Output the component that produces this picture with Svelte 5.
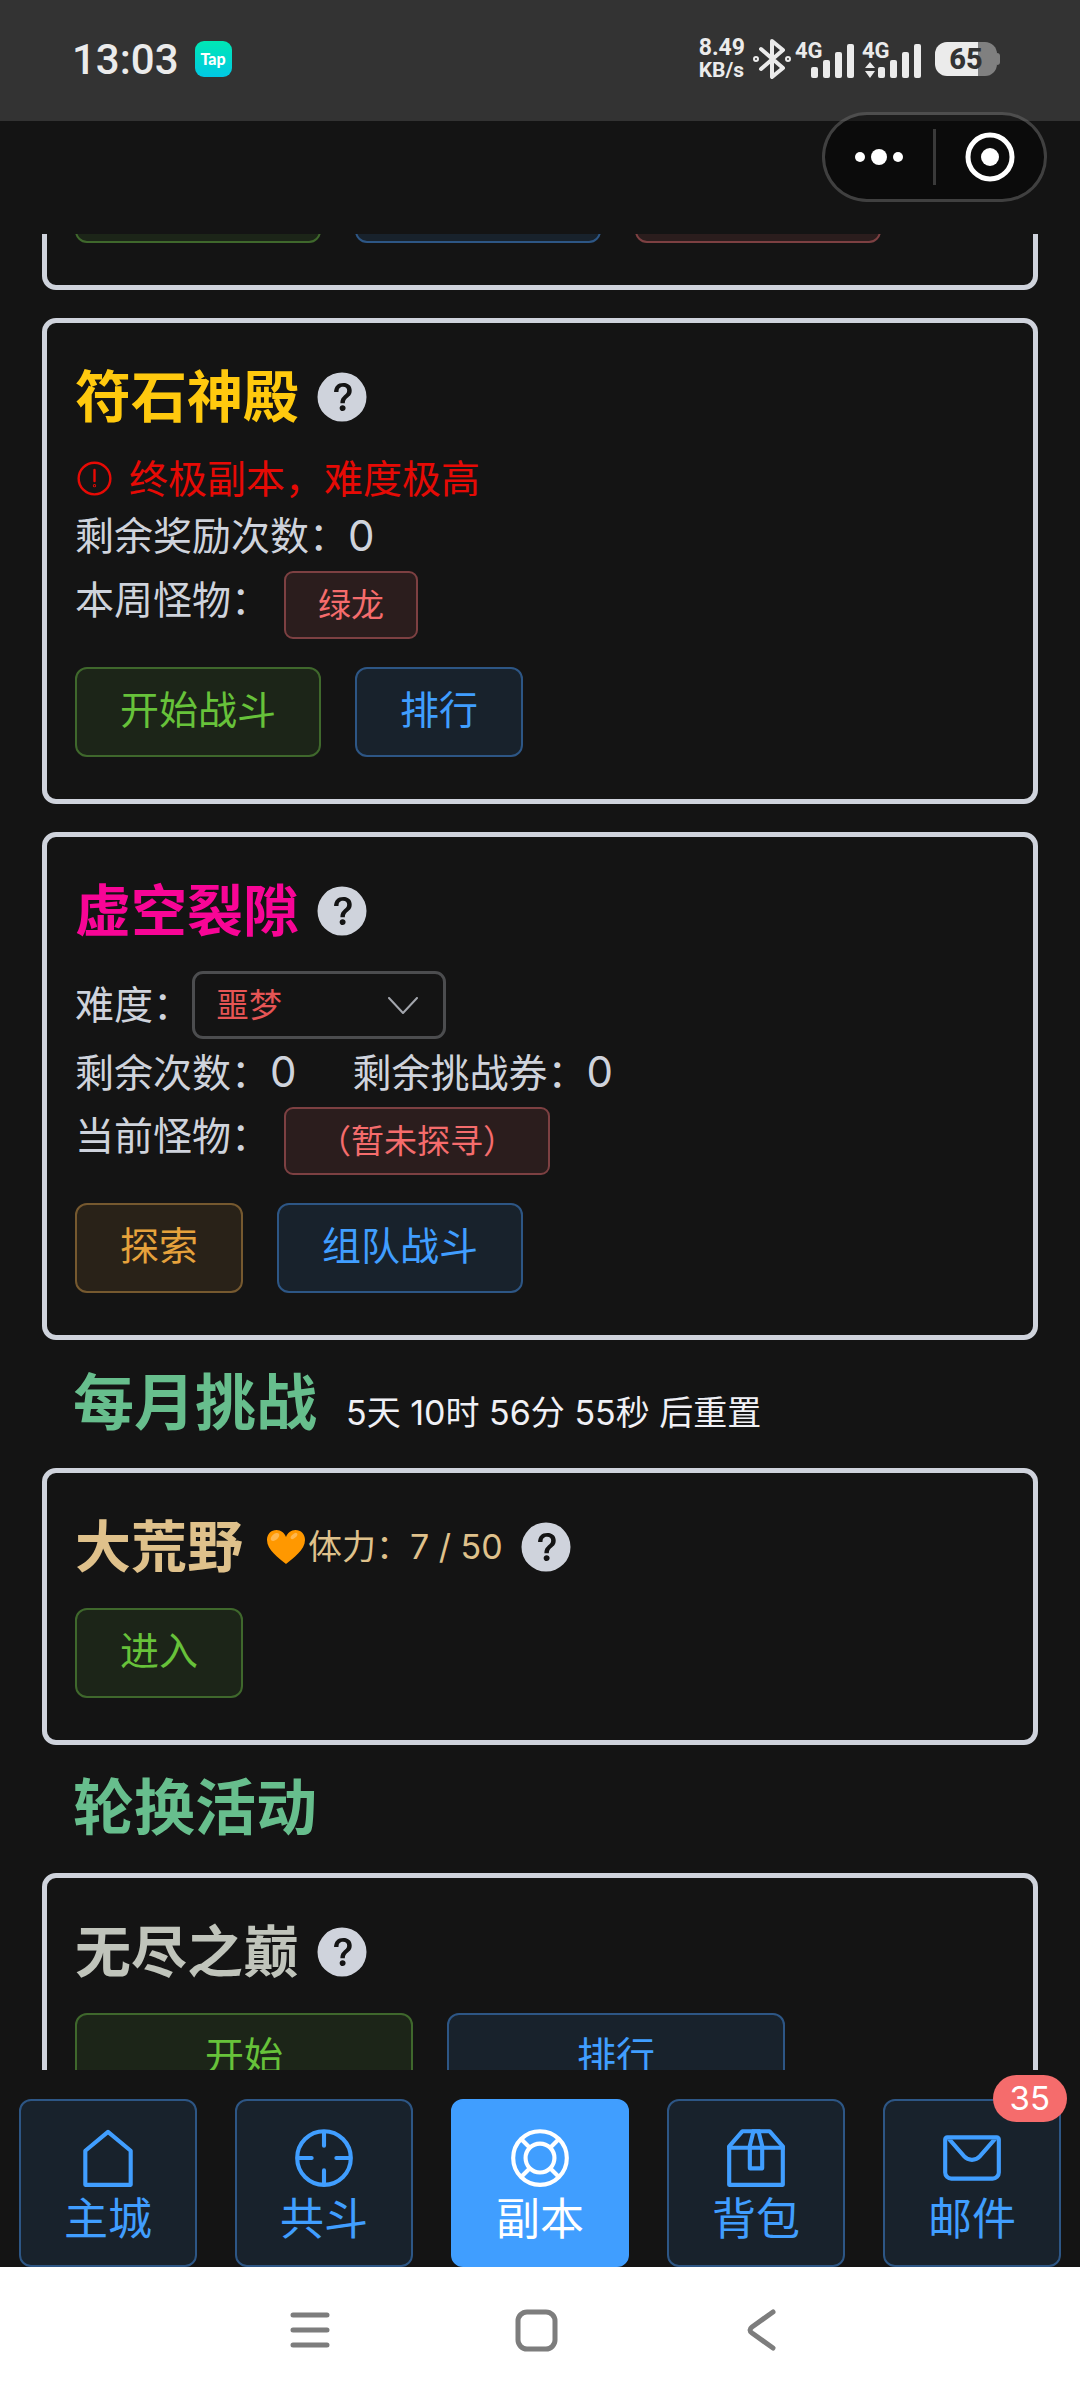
<script>
  let difficulty = $state('噩梦');
  const difficulties = ['噩梦'];

  const tabs = [
    { id: 'home', label: '主城' },
    { id: 'coop', label: '共斗' },
    { id: 'dungeon', label: '副本', active: true },
    { id: 'bag', label: '背包' },
    { id: 'mail', label: '邮件', badge: 35 }
  ];
</script>

{#snippet help()}
  <button class="help" type="button" aria-label="说明">
    <svg viewBox="0 0 1024 1024" fill="currentColor" aria-hidden="true">
      <path d="M512 64a448 448 0 1 1 0 896 448 448 0 0 1 0-896zm23.744 191.488c-52.096 0-92.928 14.784-123.2 44.352-30.976 29.568-45.76 70.4-45.76 122.496h80.256c0-29.568 5.632-52.8 17.6-68.992 13.376-19.712 35.2-28.864 66.176-28.864 23.936 0 42.944 6.336 56.32 19.712 12.672 13.376 19.712 31.68 19.712 54.912 0 17.6-6.336 34.496-19.008 49.984l-8.448 9.856c-45.76 40.832-73.216 70.4-82.368 89.408-9.856 19.008-14.08 42.24-14.08 68.992v9.856h80.96v-9.856c0-16.896 3.52-31.68 10.56-45.76 6.336-12.672 15.488-24.64 28.16-35.2 33.792-29.568 54.208-48.576 60.544-55.616 16.896-22.528 26.048-51.392 26.048-86.592 0-42.944-14.08-76.736-42.24-101.376-28.16-25.344-65.472-37.312-111.232-37.312zm-12.672 406.208a54.272 54.272 0 0 0-38.72 14.784 49.408 49.408 0 0 0-15.488 38.016c0 15.488 4.928 28.16 15.488 38.016A54.848 54.848 0 0 0 523.072 768c15.488 0 28.16-4.928 38.72-14.784a51.52 51.52 0 0 0 16.192-38.72 51.968 51.968 0 0 0-15.488-38.016 55.936 55.936 0 0 0-39.424-14.784z" />
    </svg>
  </button>
{/snippet}

{#snippet bars()}
  <svg class="bars" viewBox="0 0 43 34" fill="currentColor" aria-hidden="true">
    <rect x="0" y="23" width="7" height="11" rx="2" />
    <rect x="12" y="16" width="7" height="18" rx="2" />
    <rect x="24" y="8" width="7" height="26" rx="2" />
    <rect x="36" y="0" width="7" height="34" rx="2" />
  </svg>
{/snippet}

<div class="app">
  <header class="status">
    <div class="left">
      <span class="time">13:03</span>
      <span class="tap">Tap</span>
    </div>
    <div class="right">
      <span class="speed"><span>8.49</span><span class="unit">KB/s</span></span>
      <svg class="bt" viewBox="0 0 38 42" fill="none" stroke="currentColor" stroke-width="4" stroke-linecap="round" stroke-linejoin="round" aria-hidden="true">
        <path d="M8 11 L30 30 L19 39 V3 L30 12 L8 31" />
        <circle cx="3" cy="21" r="1" />
        <circle cx="35" cy="21" r="1" />
      </svg>
      <span class="signal first"><span class="gen">4G</span>{@render bars()}</span>
      <span class="signal second">
        <span class="gen">4G</span>
        <svg class="updown" viewBox="0 0 10 16" fill="currentColor" aria-hidden="true">
          <path d="M5 0 L10 6 H0 Z M0 9 H10 L5 16 Z" />
        </svg>
        {@render bars()}
      </span>
      <span class="battery">65</span>
    </div>
  </header>

  <div class="topbar">
    <div class="capsule">
      <button type="button" aria-label="更多">
        <svg width="48" height="18" viewBox="0 0 48 18" fill="currentColor" aria-hidden="true">
          <circle cx="5" cy="9" r="5" /><circle cx="24" cy="9" r="8" /><circle cx="43" cy="9" r="5" />
        </svg>
      </button>
      <span class="bar"></span>
      <button type="button" aria-label="关闭">
        <svg width="50" height="50" viewBox="0 0 50 50" aria-hidden="true">
          <circle cx="25" cy="25" r="22" fill="none" stroke="currentColor" stroke-width="5" />
          <circle cx="25" cy="25" r="9" fill="currentColor" />
        </svg>
      </button>
    </div>
  </div>

  <main class="scroll">
    <div class="content">
      <section class="card">
        <div class="actions">
          <button class="btn wide success" type="button" aria-label="开始"></button>
          <button class="btn wide primary" type="button" aria-label="组队"></button>
          <button class="btn wide danger" type="button" aria-label="重置"></button>
        </div>
      </section>

      <section class="card spaced">
        <div class="title"><h2 class="gold">符石神殿</h2>{@render help()}</div>
        <p class="line warn">
          <svg viewBox="0 0 1024 1024" fill="none" stroke="currentColor" stroke-width="64" stroke-linecap="round" aria-hidden="true">
            <circle cx="512" cy="512" r="416" />
            <path d="M512 288V576" />
            <circle cx="512" cy="700" r="12" />
          </svg>
          终极副本，难度极高
        </p>
        <p class="line">剩余奖励次数：<span class="num">0</span></p>
        <div class="control"><span class="label">本周怪物：</span><span class="tag">绿龙</span></div>
        <div class="actions">
          <button class="btn success" type="button">开始战斗</button>
          <button class="btn primary" type="button">排行</button>
        </div>
      </section>

      <section class="card spaced">
        <div class="title"><h2 class="pink">虚空裂隙</h2>{@render help()}</div>
        <div class="control middle">
          <label for="difficulty">难度：</label>
          <span class="select">
            <select id="difficulty" bind:value={difficulty}>
              {#each difficulties as d}<option>{d}</option>{/each}
            </select>
            <svg viewBox="0 0 30 18" fill="none" stroke="currentColor" stroke-width="2" stroke-linecap="round" stroke-linejoin="round" aria-hidden="true">
              <path d="M1 1 L15 16 L29 1" />
            </svg>
          </span>
        </div>
        <p class="line pair">
          <span>剩余次数：<span class="num">0</span></span>
          <span>剩余挑战券：<span class="num">0</span></span>
        </p>
        <div class="control"><span class="label">当前怪物：</span><span class="tag">（暂未探寻）</span></div>
        <div class="actions">
          <button class="btn warning" type="button">探索</button>
          <button class="btn primary" type="button">组队战斗</button>
        </div>
      </section>

      <div class="section"><h1>每月挑战</h1><span>5天 10时 56分 55秒 后重置</span></div>

      <section class="card">
        <div class="title">
          <h2 class="sand">大荒野</h2>
          <span class="stamina">
            <svg viewBox="0 0 38 34" aria-hidden="true">
              <path fill="#ff9800" d="M19 34C12 28 0 20 0 10C0 4 4 0 9.500 0C14 0 17.500 3 19 7C20.500 3 24 0 28.500 0C34 0 38 4 38 10C38 20 26 28 19 34Z" />
              <ellipse cx="8" cy="7" rx="5" ry="3" fill="#ffb74d" transform="rotate(-40 8 7)" />
              <ellipse cx="27" cy="6" rx="4" ry="2" fill="#ffb74d" transform="rotate(-40 27 6)" />
            </svg>
            体力：7 / 50
          </span>
          {@render help()}
        </div>
        <div class="actions"><button class="btn success" type="button">进入</button></div>
      </section>

      <div class="section"><h1>轮换活动</h1></div>

      <section class="card">
        <div class="title"><h2 class="silver">无尽之巅</h2>{@render help()}</div>
        <div class="actions">
          <button class="btn wider success" type="button">开始</button>
          <button class="btn wider primary" type="button">排行</button>
        </div>
      </section>
    </div>
  </main>

  <nav class="tabs">
    {#each tabs as tab (tab.id)}
      <button class="tab" class:active={tab.active} type="button">
        <svg viewBox="0 0 1024 1024" fill="currentColor" aria-hidden="true">
          {#if tab.id === 'home'}
            <path d="M160 399V928H864V399L512 106Z" fill="none" stroke="currentColor" stroke-width="64" stroke-linejoin="round" />
          {:else if tab.id === 'coop'}
            <g fill="none" stroke="currentColor" stroke-width="64" stroke-linecap="round">
              <circle cx="512" cy="512" r="416" />
              <path d="M512 128V320M512 704V896M128 512H320M704 512H896" />
            </g>
          {:else if tab.id === 'dungeon'}
            <g fill="none" stroke="currentColor" stroke-width="64">
              <circle cx="512" cy="512" r="416" />
              <circle cx="512" cy="512" r="224" />
              <path d="M218 218L354 354M806 218L670 354M218 806L354 670M806 806L670 670" />
            </g>
          {:else if tab.id === 'bag'}
            <path d="M317.056 128 128 344.064V896h768V344.064L706.944 128H317.056zm-14.528-64h418.944a32 32 0 0 1 24.064 10.880l206.528 236.096A32 32 0 0 1 960 332.032V928a32 32 0 0 1-32 32H96a32 32 0 0 1-32-32V332.032a32 32 0 0 1 7.936-21.120L278.400 75.008A32 32 0 0 1 302.528 64z" />
            <path d="M64 320h896v64H64z" />
            <path d="M448 327.872V640h128V327.872L526.080 128h-28.160L448 327.872zM448 64h128l64 256v352a32 32 0 0 1-32 32H416a32 32 0 0 1-32-32V320l64-256z" />
          {:else}
            <path d="M128 224v512a64 64 0 0 0 64 64h640a64 64 0 0 0 64-64V224H128zm0-64h768a64 64 0 0 1 64 64v512a128 128 0 0 1-128 128H192A128 128 0 0 1 64 736V224a64 64 0 0 1 64-64z" />
            <path d="M904 224 656.512 506.880a192 192 0 0 1-289.024 0L120 224h784zm-698.944 0 210.560 240.704a128 128 0 0 0 192.704 0L818.944 224H205.056z" />
          {/if}
        </svg>
        <span>{tab.label}</span>
        {#if tab.badge}<span class="badge">{tab.badge}</span>{/if}
      </button>
    {/each}
  </nav>

  <footer class="system">
    <button type="button" aria-label="最近任务">
      <svg viewBox="0 0 44 44" aria-hidden="true"><path d="M5 7H39M5 22H39M5 37H39" /></svg>
    </button>
    <button type="button" aria-label="主屏幕">
      <svg viewBox="0 0 44 44" aria-hidden="true"><rect x="4" y="4" width="37" height="37" rx="9" /></svg>
    </button>
    <button type="button" aria-label="返回">
      <svg viewBox="0 0 44 44" aria-hidden="true"><path d="M33 4L12 19Q8 22 12 25L33 40" /></svg>
    </button>
  </footer>
</div>

<style>
  :global(body) {
    margin: 0;
    background: #141414;
  }
  .app {
    display: flex;
    flex-direction: column;
    height: 100vh;
    background: #141414;
    color: #cfd3dc;
    font-family: Inter, 'Noto Sans CJK SC', sans-serif;
    font-size: 39px;
  }
  button,
  select {
    margin: 0;
    padding: 0;
    border: 0;
    background: none;
    color: inherit;
    font: inherit;
  }
  svg {
    display: block;
    flex: none;
  }
  h1,
  h2,
  p {
    margin: 0;
  }

  .status {
    flex: none;
    display: flex;
    justify-content: space-between;
    box-sizing: border-box;
    height: 121px;
    padding: 39px 83px 42px 72px;
    background: #333;
    color: #ebebeb;
    font-family: Roboto, sans-serif;
  }
  .left,
  .right {
    display: flex;
    align-items: center;
  }
  .left {
    gap: 16px;
  }
  .time {
    font-size: 42px;
    font-weight: 500;
  }
  .tap {
    width: 37px;
    border-radius: 9px;
    background: linear-gradient(#00e8b4, #00c8e4);
    color: #fff;
    font: 900 16px/36px Lato, sans-serif;
    text-align: center;
  }
  .speed {
    display: flex;
    flex-direction: column;
    font-size: 23px;
    font-weight: 700;
    line-height: 23px;
  }
  .unit {
    font-size: 21px;
  }
  .bt {
    width: 38px;
    height: 42px;
    margin-left: 8px;
  }
  .signal {
    display: flex;
    align-items: flex-end;
    height: 38px;
    margin-left: 4px;
  }
  .gen {
    align-self: flex-start;
    width: 16px;
    font-size: 22px;
    font-weight: 700;
    line-height: 22px;
  }
  .bars {
    width: 43px;
    height: 34px;
  }
  .signal.second {
    margin-left: 8px;
  }
  .second .gen {
    width: 3px;
  }
  .updown {
    width: 10px;
    height: 16px;
    margin-right: 3px;
  }
  .battery {
    position: relative;
    width: 62px;
    margin-left: 14px;
    border-radius: 12px;
    background: linear-gradient(90deg, #ebebeb 70%, #808080 70%);
    color: #333;
    font-size: 29px;
    font-weight: 800;
    line-height: 34px;
    text-align: center;
  }
  .battery::after {
    content: '';
    position: absolute;
    left: 100%;
    top: 11px;
    width: 3px;
    height: 12px;
    border-radius: 0 3px 3px 0;
    background: #808080;
  }

  .topbar {
    position: relative;
    flex: none;
    height: 113px;
  }
  .capsule {
    position: absolute;
    top: -9px;
    right: 33px;
    display: flex;
    align-items: center;
    box-sizing: border-box;
    width: 225px;
    height: 90px;
    border: 3px solid rgba(255, 255, 255, 0.22);
    border-radius: 45px;
    background: rgba(0, 0, 0, 0.45);
    color: #fff;
  }
  .capsule button {
    flex: 1;
    display: flex;
    justify-content: center;
  }
  .capsule .bar {
    width: 3px;
    height: 56px;
    background: #3a3a3a;
  }

  .scroll {
    flex: 1;
    min-height: 0;
    overflow: hidden auto;
    scrollbar-width: none;
  }
  .content {
    margin-top: -156px;
    padding: 0 42px;
  }
  .card {
    padding: 46px 28px 42px;
    border: 5px solid #cfd3dc;
    border-radius: 14px;
  }
  .spaced {
    margin-top: 28px;
  }
  .title {
    display: flex;
    align-items: center;
    height: 56px;
    margin-bottom: 25px;
  }
  h2 {
    font-size: 56px;
    font-weight: 700;
    line-height: 56px;
  }
  .gold {
    color: #ffc90e;
  }
  .pink {
    color: #f80596;
  }
  .sand {
    color: #dfc18b;
  }
  .silver {
    color: #c0c4bb;
  }
  .help {
    margin-left: 15px;
    color: #cfd3dc;
  }
  .help svg {
    width: 56px;
    height: 56px;
  }
  .stamina {
    display: flex;
    align-items: center;
    gap: 3px;
    margin-left: 24px;
    color: #dfc18b;
    font-size: 34px;
    line-height: 52px;
  }
  .stamina svg {
    width: 38px;
    height: 34px;
  }

  .line {
    display: flex;
    align-items: center;
    height: 57px;
    line-height: 57px;
  }
  .pair {
    gap: 56px;
  }
  .num {
    font-size: 42px;
  }
  .warn {
    gap: 15px;
    color: #e60a05;
  }
  .warn svg {
    width: 39px;
    height: 39px;
  }
  .control {
    display: flex;
    padding: 7px 0 4px;
    line-height: 58px;
  }
  .middle {
    align-items: center;
  }
  .tag {
    margin-left: 14px;
    padding: 0 32px;
    border: 2px solid #7d4042;
    border-radius: 9px;
    background: #2b1d1d;
    color: #f56c6c;
    font-size: 33px;
    line-height: 64px;
  }
  .select {
    position: relative;
  }
  select {
    display: block;
    appearance: none;
    box-sizing: border-box;
    width: 254px;
    height: 68px;
    padding: 0 60px 0 21px;
    border: 3px solid #4c4d4f;
    border-radius: 11px;
    color: #e65555;
    font-size: 33px;
  }
  .select svg {
    position: absolute;
    right: 28px;
    top: 26px;
    width: 30px;
    height: 18px;
    color: #a3a6ad;
    pointer-events: none;
  }

  .actions {
    display: flex;
    gap: 34px;
    margin-top: 24px;
  }
  .title + .actions {
    margin-top: 33px;
  }
  .btn {
    box-sizing: border-box;
    height: 90px;
    padding: 0 43px 4px;
    border: 2px solid;
    border-radius: 12px;
    line-height: 56px;
  }
  .wide {
    width: 246px;
  }
  .wider {
    width: 338px;
  }
  .success {
    border-color: #3f682c;
    background: #1c2518;
    color: #67c23a;
  }
  .primary {
    border-color: #2d5685;
    background: #18222c;
    color: #409eff;
  }
  .danger {
    border-color: #7d4042;
    background: #2b1d1d;
    color: #f56c6c;
  }
  .warning {
    border-color: #76592f;
    background: #292218;
    color: #e6a23c;
  }

  .section {
    display: flex;
    align-items: baseline;
    gap: 29px;
    height: 95px;
    padding: 33px 31px 0;
    color: #f0f0f5;
    font-size: 34px;
    line-height: 61px;
  }
  h1 {
    color: #67be8d;
    font-size: 61px;
    font-weight: 700;
  }

  .tabs {
    flex: none;
    display: grid;
    grid-template-columns: repeat(5, 1fr);
    gap: 38px;
    padding: 29px 19px 0;
  }
  .tab {
    position: relative;
    display: flex;
    flex-direction: column;
    align-items: center;
    gap: 6px;
    height: 168px;
    box-sizing: border-box;
    padding-top: 24px;
    border: 2px solid #2d5685;
    border-radius: 12px;
    background: #18222c;
    color: #409eff;
    font-size: 44px;
    line-height: 44px;
  }
  .tab svg {
    width: 66px;
    height: 66px;
  }
  .active {
    border-color: #409eff;
    background: #409eff;
    color: #fff;
  }
  .badge {
    position: absolute;
    top: -26px;
    right: -8px;
    padding: 0 17px;
    border-radius: 24px;
    background: #f56c6c;
    color: #fff;
    font-size: 33px;
    line-height: 47px;
  }

  .system {
    flex: none;
    display: grid;
    grid-template-columns: repeat(3, 1fr);
    align-items: center;
    height: 133px;
    box-sizing: border-box;
    padding: 0 205px 8px 197px;
    background: #fff;
  }
  .system button {
    display: flex;
    justify-content: center;
  }
  .system svg {
    width: 44px;
    height: 44px;
    fill: none;
    stroke: #7d7d7d;
    stroke-width: 5px;
    stroke-linecap: round;
    stroke-linejoin: round;
  }
</style>
